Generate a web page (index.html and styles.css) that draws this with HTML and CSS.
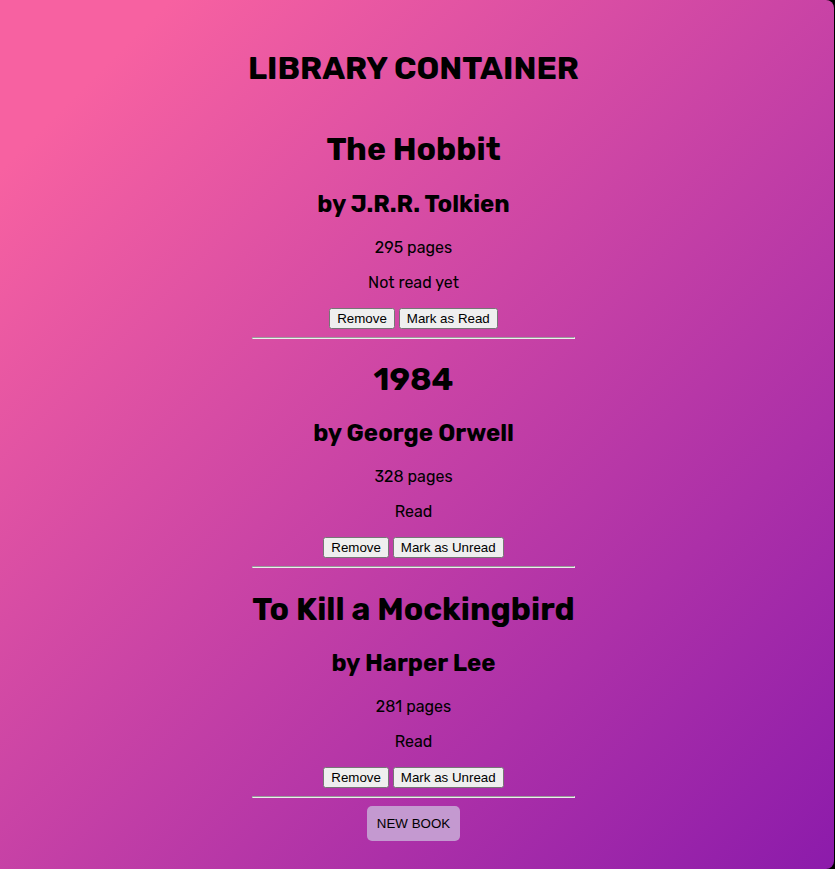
FILE: index.html
```html
<!DOCTYPE html>
<html lang="en">
<head>
<meta charset="utf-8">
<meta name="viewport" content="width=device-width, initial-scale=1">
<title>Library</title>
<link rel="stylesheet" href="styles.css">
</head>
<body>
<main class="library">
  <h1>LIBRARY CONTAINER</h1>
  <div class="books">
    <div class="book">
      <h1>The Hobbit</h1>
      <h2>by J.R.R. Tolkien</h2>
      <p>295 pages</p>
      <p>Not read yet</p>
      <button type="button">Remove</button>
      <button type="button">Mark as Read</button>
      <hr>
    </div>
    <div class="book">
      <h1>1984</h1>
      <h2>by George Orwell</h2>
      <p>328 pages</p>
      <p>Read</p>
      <button type="button">Remove</button>
      <button type="button">Mark as Unread</button>
      <hr>
    </div>
    <div class="book">
      <h1>To Kill a Mockingbird</h1>
      <h2>by Harper Lee</h2>
      <p>281 pages</p>
      <p>Read</p>
      <button type="button">Remove</button>
      <button type="button">Mark as Unread</button>
      <hr>
    </div>
  </div>
  <button type="button" class="new-book">NEW BOOK</button>
</main>
</body>
</html>
```

FILE: styles.css
```css
* {
  box-sizing: border-box;
}

body {
  margin: 0;
  padding-right: 1px;
  background: #000;
  color: #000;
  font-family: Rubik, Inter, sans-serif;
  text-align: center;
}

.library {
  display: flex;
  flex-direction: column;
  align-items: center;
  justify-content: center;
  min-height: 100vh;
  padding-right: 7px;
  border-radius: 0 8px 8px 0;
  background: linear-gradient(135deg, #f761a1 10%, #8c1bab 100%);
}

.books {
  display: flow-root;
}

button {
  font-family: "Liberation Sans", Arial, sans-serif;
}

.new-book {
  padding: 10px;
  border: 0;
  border-radius: 5px;
  background: #c499d0;
  color: #000;
}
```
